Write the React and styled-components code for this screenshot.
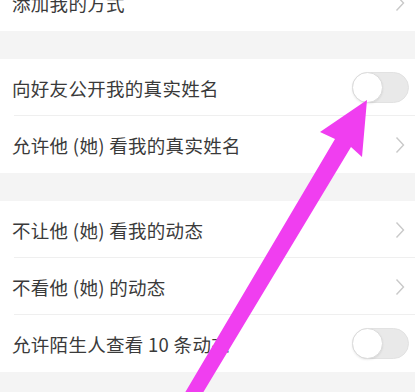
import React from "react";
import styled, { createGlobalStyle } from "styled-components";

const GlobalStyle = createGlobalStyle`
  html, body {
    margin: 0;
    padding: 0;
    background: #f4f4f4;
    overflow: hidden;
  }
  body {
    font-family: "Noto Sans CJK SC", "Noto Sans", sans-serif;
  }
`;

const Page = styled.div`
  position: relative;
  width: 415px;
  height: 392px;
  overflow: hidden;
  background: #f4f4f4;
`;

const List = styled.div`
  display: flex;
  flex-direction: column;
  margin-top: ${(props) => props.offset || 0}px;
`;

const Group = styled.div`
  background: #ffffff;
  margin-bottom: 28px;
`;

const Row = styled.div`
  height: 57px;
  display: flex;
  align-items: center;
  justify-content: space-between;
  padding: 0 6px 0 12px;
  position: relative;
  box-sizing: border-box;
  &:not(:last-child)::after {
    content: "";
    position: absolute;
    left: 14px;
    right: 0;
    bottom: 0;
    height: 1px;
    background: #efefef;
  }
`;

const Label = styled.span`
  font-size: 18.5px;
  color: #3a3a3a;
  letter-spacing: 0.3px;
`;

const Chevron = styled.svg`
  width: 10px;
  height: 18px;
  margin-right: 4px;
`;

const Toggle = styled.div`
  width: 57px;
  height: 31px;
  border-radius: 16px;
  background: #e9e9e9;
  border: 1px solid #e2e2e2;
  box-sizing: border-box;
  position: relative;
`;

const Knob = styled.div`
  position: absolute;
  left: -1px;
  top: -1px;
  width: 31px;
  height: 31px;
  border-radius: 50%;
  background: #ffffff;
  border: 1px solid #dcdcdc;
  box-sizing: border-box;
  box-shadow: 0 1px 2px rgba(0, 0, 0, 0.08);
`;

const Arrow = styled.svg`
  position: absolute;
  left: 0;
  top: 0;
  pointer-events: none;
`;

const Arr = () => (
  <Chevron viewBox="0 0 10 18">
    <path d="M1.5 1.5 L8.5 9 L1.5 16.5" fill="none" stroke="#c9c9c9" strokeWidth="1.4" />
  </Chevron>
);

const Switch = () => (
  <Toggle>
    <Knob />
  </Toggle>
);

const groups = [
  [{ text: "添加我的方式", kind: "arrow" }],
  [
    { text: "向好友公开我的真实姓名", kind: "switch" },
    { text: "允许他 (她) 看我的真实姓名", kind: "arrow" },
  ],
  [
    { text: "不让他 (她) 看我的动态", kind: "arrow" },
    { text: "不看他 (她) 的动态", kind: "arrow" },
    { text: "允许陌生人查看 10 条动态", kind: "switch" },
  ],
];

const App = () => {
  return (
    <Page>
      <GlobalStyle />
      <List offset={-26}>
        {groups.map((g, i) => (
          <Group key={i}>
            {g.map((r) => (
              <Row key={r.text}>
                <Label>{r.text}</Label>
                {r.kind === "switch" ? <Switch /> : <Arr />}
              </Row>
            ))}
          </Group>
        ))}
      </List>
      <Arrow width="415" height="392" viewBox="0 0 415 392">
        <polygon
          points="367,100 362,157 351,147 201,396 183,396 335,139 320,132"
          fill="#f03ef0"
        />
      </Arrow>
    </Page>
  );
};

export default App;
